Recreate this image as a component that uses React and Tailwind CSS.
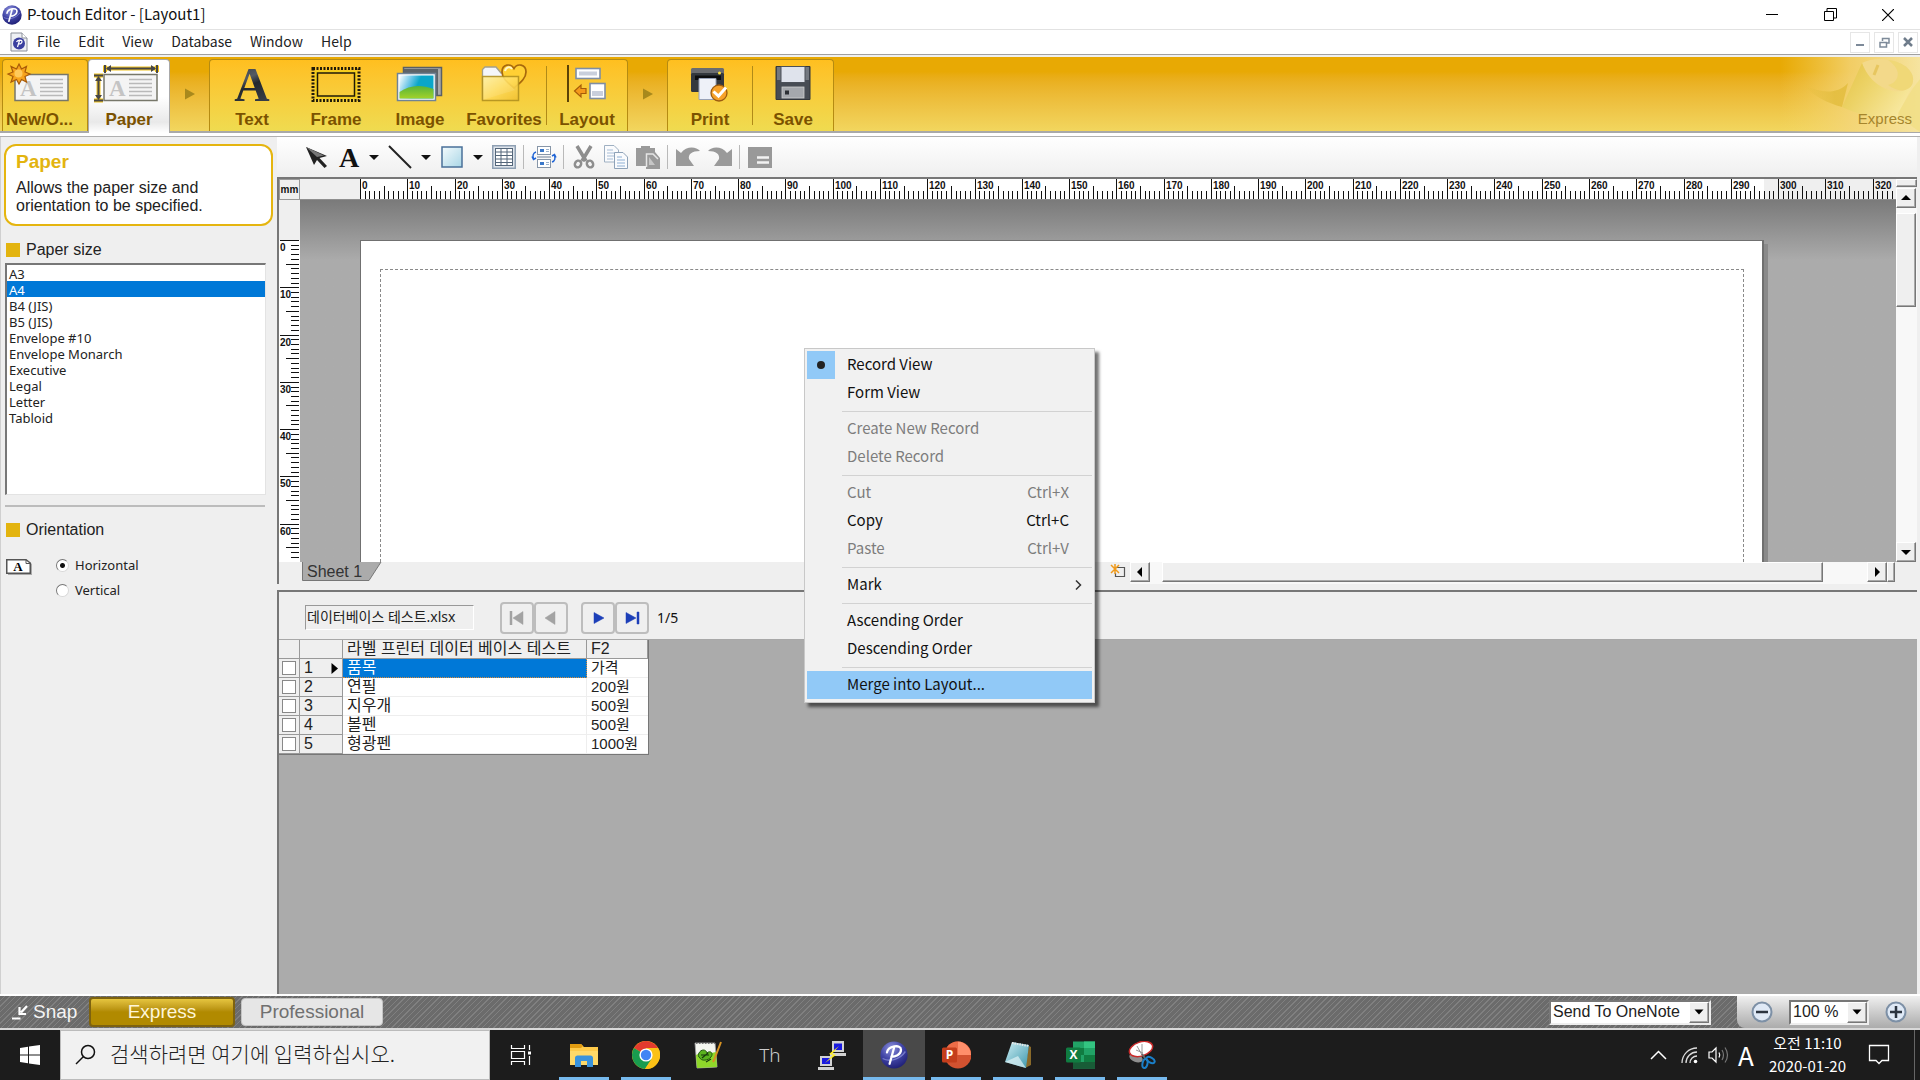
import React from 'react';
import clsx from 'clsx';

const MM = 4.727; // pixels per millimetre at 100 %

const menus = ['File', 'Edit', 'View', 'Database', 'Window', 'Help'];

const paperSizes = [
  'A3', 'A4', 'B4 (JIS)', 'B5 (JIS)', 'Envelope #10', 'Envelope Monarch',
  'Executive', 'Legal', 'Letter', 'Tabloid',
];

const records = [
  ['품목', '가격'],
  ['연필', '200원'],
  ['지우개', '500원'],
  ['볼펜', '500원'],
  ['형광펜', '1000원'],
];

const contextMenu = [
  { label: 'Record View', checked: true },
  { label: 'Form View' },
  null,
  { label: 'Create New Record', disabled: true },
  { label: 'Delete Record', disabled: true },
  null,
  { label: 'Cut', keys: 'Ctrl+X', disabled: true },
  { label: 'Copy', keys: 'Ctrl+C' },
  { label: 'Paste', keys: 'Ctrl+V', disabled: true },
  null,
  { label: 'Mark', sub: true },
  null,
  { label: 'Ascending Order' },
  { label: 'Descending Order' },
  null,
  { label: 'Merge into Layout...', active: true },
];

/* ---------- Icons ---------- */

const PLogo = ({ size, id }) => (
  <svg width={size} height={size} viewBox="0 0 32 32" className="shrink-0">
    <defs>
      <radialGradient id={id} cx="0.4" cy="0.25" r="0.8">
        <stop offset="0" stopColor="#8f93dc" />
        <stop offset="0.5" stopColor="#4347a8" />
        <stop offset="1" stopColor="#1c1c72" />
      </radialGradient>
    </defs>
    <circle cx="16" cy="16" r="15.5" fill={`url(#${id})`} />
    <path d="M3 20C10 24 22 22 29 12" stroke="#9ea3ea" strokeWidth="1.5" fill="none" opacity="0.6" />
    <path d="M16 8 L11 26 M8 13C9 6 24 3 24 10C24 16 17 18 13 18" stroke="#fff" strokeWidth="2.6" fill="none" strokeLinecap="round" />
  </svg>
);

const DocLogo = () => (
  <svg width="18" height="20" viewBox="0 0 18 20" className="shrink-0">
    <path d="M1 1H12L17 6V19H1Z" fill="#eef0f4" stroke="#8a8f99" />
    <path d="M12 1V6H17" fill="#fff" stroke="#8a8f99" />
    <circle cx="9" cy="11.5" r="6" fill="#3a3f9f" />
    <path d="M9.5 8.5L7.5 15M6.5 10C7.5 7.5 12 7.5 12 9.5C12 11.5 9.5 12 8.5 12" stroke="#fff" strokeWidth="1.2" fill="none" />
  </svg>
);

const LabelCard = ({ x }) => (
  <g>
    <rect x={x} y="14.5" width="53" height="26" fill="#f4f4f4" stroke="#77776a" strokeWidth="1.5" />
    <text x={x + 5} y="36" fontSize="23" fontWeight="bold" fontFamily="Liberation Serif, serif" fill="#c4c4c4">A</text>
    <path d={`M${x + 25} 19.5h23M${x + 25} 23.5h23M${x + 25} 27.5h23M${x + 25} 31.5h23M${x + 25} 35.5h23`} stroke="#b9b9b9" strokeWidth="1.5" />
  </g>
);

const NewIcon = () => (
  <svg width="66" height="44" viewBox="0 0 66 44">
    <LabelCard x={9} />
    <path d="M13 4L15.5 9L20.5 6.500L19 12L24 14L19 16.500L20.500 22L15.500 19.500L13 24L10.500 19.500L5 22L7 16.500L2 14L7 12L5 6.500L10.500 9Z" fill="#f7a31c" stroke="#a85a08" strokeWidth="1.2" />
    <circle cx="12.500" cy="13.500" r="4" fill="#ffc95a" />
  </svg>
);

const PaperIcon = () => (
  <svg width="72" height="44" viewBox="0 0 72 44">
    <g stroke="#f0c21c" strokeWidth="4">
      <path d="M12 5.500V12M64 5.500V12M14 8.500H62M1 15.500H10M1 40.500H10M5.500 16V40" />
    </g>
    <LabelCard x={11} />
    <path d="M12 5V13M64 5V13M14 8.500H62M1 15.500H10M1 40.500H10M5.500 18V38" stroke="#474747" strokeWidth="2" />
    <path d="M13 8.500L18 5V12ZM63 8.500L58 5V12ZM5.500 16L9 21H2ZM5.500 40L9 35H2Z" fill="#474747" />
  </svg>
);

const TextIcon = () => (
  <svg width="50" height="44" viewBox="0 0 50 44" className="overflow-visible">
    <defs>
      <linearGradient id="letter" x1="0" y1="0" x2="0.3" y2="1">
        <stop offset="0" stopColor="#23272d" />
        <stop offset="0.45" stopColor="#555b63" />
        <stop offset="0.6" stopColor="#23282e" />
        <stop offset="1" stopColor="#39404a" />
      </linearGradient>
    </defs>
    <text x="25" y="41" textAnchor="middle" fontSize="49" fontWeight="bold" fontFamily="Liberation Serif, serif" fill="url(#letter)">A</text>
  </svg>
);

const FrameIcon = () => (
  <svg width="50" height="44" viewBox="0 0 50 44">
    <rect x="2" y="8.500" width="46" height="32" fill="none" stroke="#1f1a08" strokeWidth="3" strokeDasharray="2 1.500" />
    <rect x="5" y="11.500" width="40" height="26" fill="none" stroke="#f4cf1a" strokeWidth="2" />
    <rect x="6.500" y="13" width="37" height="23" fill="none" stroke="#1f1a08" strokeWidth="1.500" />
  </svg>
);

const ImageIcon = () => (
  <svg width="50" height="44" viewBox="0 0 50 44">
    <defs>
      <linearGradient id="sky" x1="0" y1="0" x2="1" y2="0.3">
        <stop offset="0" stopColor="#fff" />
        <stop offset="0.35" stopColor="#6cc6e8" />
        <stop offset="0.6" stopColor="#0aa6c9" />
      </linearGradient>
      <linearGradient id="hill" x1="0" y1="0" x2="0" y2="1">
        <stop offset="0" stopColor="#56b33a" />
        <stop offset="1" stopColor="#a3d22a" />
      </linearGradient>
    </defs>
    <rect x="8.500" y="7.500" width="38" height="28" fill="#a9a9a9" stroke="#595f66" strokeWidth="1.500" />
    <rect x="9" y="9" width="34" height="26" fill="#5d6368" />
    <rect x="2.500" y="13.500" width="38" height="27" fill="#fff" stroke="#6f8396" strokeWidth="1.500" />
    <rect x="4.500" y="15.500" width="34" height="23" fill="url(#sky)" />
    <path d="M4.500 32C14 25 26 24 38.500 29V38.500H4.500Z" fill="url(#hill)" />
  </svg>
);

const FavoritesIcon = () => (
  <svg width="50" height="44" viewBox="0 0 50 44">
    <defs>
      <linearGradient id="folder" x1="0" y1="0" x2="1" y2="1">
        <stop offset="0" stopColor="#fff0a0" />
        <stop offset="0.5" stopColor="#ffdc5c" />
        <stop offset="1" stopColor="#f0c030" />
      </linearGradient>
    </defs>
    <path d="M3.500 40V9.500L6 7H17L22 13H36V30" fill="#f4f6fa" stroke="#a3a08c" strokeWidth="1.300" />
    <path d="M35 28C28 22 23 18 23 12C23 4 32 3 35 8.500C38 3 47 4 47 12C47 18 42 22 35 28Z" fill="#ffd034" stroke="#a8690c" strokeWidth="1.700" />
    <path d="M26 11C27 7 31 6 33 9" stroke="#fff6c8" strokeWidth="2" fill="none" />
    <path d="M3.500 16.500H39.500V40.500H3.500Z" fill="url(#folder)" stroke="#b39220" strokeWidth="1.500" opacity="0.900" />
  </svg>
);

const LayoutIcon = () => (
  <svg width="50" height="44" viewBox="0 0 50 44">
    <path d="M6 5V42" stroke="#5b4206" strokeWidth="2" />
    <rect x="14" y="8.500" width="24" height="10" fill="#fff" stroke="#7f8ea3" strokeWidth="1.600" />
    <path d="M17 13.500H35" stroke="#c9cfdc" strokeWidth="4" />
    <rect x="28" y="23.500" width="15" height="15" fill="#fff" stroke="#7f8ea3" strokeWidth="1.600" />
    <rect x="30" y="31" width="11" height="5" fill="#c9cfdc" />
    <path d="M12.500 31L19 25V28.500H24V33.500H19V37Z" fill="#f59a1b" stroke="#a65c08" strokeWidth="1.200" />
  </svg>
);

const PrintIcon = () => (
  <svg width="50" height="44" viewBox="0 0 50 44">
    <rect x="6" y="8" width="33" height="8" rx="1.500" fill="#6a6c70" />
    <rect x="6" y="13" width="33" height="19" rx="1.500" fill="#33383e" />
    <path d="M10 15.500H36V20H10Z" fill="#0d0e10" />
    <circle cx="34.500" cy="13" r="1.500" fill="#ffe23a" />
    <path d="M14 18.500H31V39.500H14Z" fill="#eef1f8" stroke="#98a2b8" />
    <circle cx="34" cy="33" r="8" fill="#f7a22a" stroke="#9c5c10" strokeWidth="1.300" />
    <path d="M28.500 31.500L33.500 36L41 27.500" stroke="#fff" strokeWidth="3" fill="none" />
  </svg>
);

const SaveIcon = () => (
  <svg width="50" height="44" viewBox="0 0 50 44">
    <path d="M8 6.500H42V39.500H8Z" fill="#474c54" stroke="#33373d" />
    <path d="M9 7H41V20H9Z" fill="#737880" />
    <rect x="13" y="6.500" width="24" height="16" fill="#dfe3ec" stroke="#4c5159" />
    <rect x="14" y="27" width="22" height="11" fill="#a5a8ad" stroke="#cfcfcf" strokeWidth="0.800" />
    <rect x="17" y="30.500" width="4" height="4" fill="#2c2f34" />
  </svg>
);

const TapeArt = () => (
  <svg width="140" height="75" viewBox="0 0 140 75" className="shrink-0">
    <defs>
      <linearGradient id="tapeBg" x1="0" y1="0" x2="1" y2="0">
        <stop offset="0" stopColor="#f3d56a" stopOpacity="0" />
        <stop offset="0.5" stopColor="#f4d67c" stopOpacity="0.8" />
        <stop offset="1" stopColor="#f6e4a0" />
      </linearGradient>
      <linearGradient id="tape" x1="0" y1="0" x2="1" y2="0.6">
        <stop offset="0" stopColor="#e4c246" />
        <stop offset="0.4" stopColor="#ecd265" />
        <stop offset="1" stopColor="#f8e9a2" />
      </linearGradient>
      <linearGradient id="tapeTail" x1="0" y1="0" x2="1" y2="0">
        <stop offset="0" stopColor="#e2bc3c" stopOpacity="0" />
        <stop offset="0.7" stopColor="#e2bc3c" />
      </linearGradient>
    </defs>
    <rect width="140" height="75" fill="url(#tapeBg)" />
    <path d="M24 28C42 37 58 37 68 26L62 50C48 46 34 40 24 28Z" fill="url(#tapeTail)" opacity="0.800" />
    <path d="M108 3C128 5 139 20 130 31C125 36 110 34 98 28C92 24 86 16 82 6C90 2 100 1 108 3Z" fill="#f3d98a" />
    <path d="M108 3C128 5 139 20 130 31C125 36 115 33 108 28C118 26 124 14 108 3Z" fill="#efd772" opacity="0.800" />
    <path d="M82 6C86 18 96 30 112 34C122 36 130 32 133 27L118 58L122 65C100 62 78 58 62 50Z" fill="url(#tape)" />
    <path d="M133 31L140 22V75C130 68 122 62 118 56Z" fill="#f1de82" opacity="0.700" />
    <path d="M94 18L98 8" stroke="#e3bf4d" strokeWidth="3" opacity="0.700" />
  </svg>
);

const Svg24 = ({ children }) => (
  <svg width="24" height="24" viewBox="0 0 24 24" className="shrink-0 overflow-visible">{children}</svg>
);

const DropArrow = () => (
  <svg width="12" height="24" viewBox="0 0 12 24" className="shrink-0">
    <path d="M1 10H11L6 15Z" fill="#111" />
  </svg>
);

/* ---------- Small parts ---------- */

const RibbonButton = ({ label, icon, className = 'w-[84px] items-center' }) => (
  <button type="button" className={clsx('flex flex-col justify-between whitespace-nowrap pb-px text-[17px] leading-5 font-bold text-[#7b5200]', className)}>
    {icon}
    <span>{label}</span>
  </button>
);

const RibbonGap = () => (
  <div className="flex w-[39px] items-center justify-center">
    <svg width="12" height="12" viewBox="0 0 12 12"><path d="M1 0.500L11 6L1 11.500Z" fill="#a8891c" /></svg>
  </div>
);

const ToolButton = ({ label, children, drop }) => (
  <button type="button" aria-label={label} className="flex items-center gap-2">
    <Svg24>{children}</Svg24>
    {drop && <DropArrow />}
  </button>
);

const ToolSep = () => <div className="-mx-px h-6 w-0.5 border-l border-[#b9b9b9]" />;

const HRuler = () => {
  const ticks = [];
  for (let i = 0; i <= 324; i++) {
    const x = Math.round(60 + i * MM);
    const len = i % 10 === 0 ? 20 : i % 5 === 0 ? 13 : 8;
    ticks.push(<rect key={i} x={x} y={20 - len} width="1" height={len} fill="#111" />);
    if (i % 10 === 0) {
      ticks.push(<text key={`t${i}`} x={x + 2} y="10" fontSize="10" fontWeight="bold" fill="#111">{i}</text>);
    }
  }
  return (
    <svg height="21" className="block w-full min-w-0 flex-1 border-b border-[#8f8f8f] bg-[#efefef]">
      <rect x="61" width="1403" height="21" fill="#fff" />
      {ticks}
    </svg>
  );
};

const VRuler = () => {
  const ticks = [];
  for (let i = 0; i <= 67; i++) {
    const y = Math.round(40 + i * MM);
    const len = i % 10 === 0 ? 19 : i % 5 === 0 ? 13 : 8;
    ticks.push(<rect key={i} x={20 - len} y={y} width={len} height="1" fill="#111" />);
    if (i % 10 === 0) {
      ticks.push(<text key={`t${i}`} x="1" y={y + 11} fontSize="10" fontWeight="bold" fill="#111">{i}</text>);
    }
  }
  return (
    <svg width="21" height="362" className="block shrink-0 bg-white">
      <rect width="21" height="40" fill="#efefef" />
      {ticks}
    </svg>
  );
};

const raised = 'border border-t-white border-l-white border-r-[#777] border-b-[#777] bg-[#efefef] shadow-[inset_-1px_-1px_#a8a8a8]';

const ScrollButton = ({ label, d, className }) => (
  <button type="button" aria-label={label} className={clsx('flex h-5 w-5 shrink-0 items-center justify-center', raised, className)}>
    <svg width="10" height="10" viewBox="0 0 10 10"><path d={d} fill="#000" /></svg>
  </button>
);

const NavButton = ({ label, d, on }) => (
  <button type="button" aria-label={label} className="flex h-8 w-[34px] items-center justify-center rounded border-2 border-[#bdbdbd] bg-[#efefef]">
    <svg width="16" height="14" viewBox="0 0 16 14">
      <path d={d} fill={on ? '#1c3fb8' : '#a3a3a3'} stroke={on ? '#1c3fb8' : '#a3a3a3'} strokeWidth="0.500" />
    </svg>
  </button>
);

const Heading = ({ children }) => (
  <h2 className="flex items-center gap-1.5 pl-[5px] text-base leading-5 text-[#222]">
    <span className="h-3.5 w-3.5 bg-[#e3b40f]" />
    {children}
  </h2>
);

const ComboBox = ({ label, value, className }) => (
  <div className={clsx('flex h-[25px] border-2 border-t-[#777] border-l-[#777] border-r-[#eee] border-b-[#eee] bg-white', className)}>
    <select aria-label={label} className="min-w-0 flex-1 appearance-none bg-white pl-0.5 text-base leading-5 text-[#222] outline-none">
      <option>{value}</option>
    </select>
    <span className={clsx('flex w-5 items-center justify-center', raised)}>
      <svg width="10" height="6" viewBox="0 0 10 6"><path d="M0.500 0.500H9.500L5 5.500Z" fill="#000" /></svg>
    </span>
  </div>
);

const TaskIcon = ({ label, children, open, active }) => (
  <button
    type="button"
    aria-label={label}
    className={clsx('relative flex h-full w-[62px] items-center justify-center', active && 'bg-[#494949]')}
  >
    {children}
    {open && <span className={clsx('absolute bottom-0 h-[3px] bg-[#76b9ed]', active ? 'inset-x-0' : 'inset-x-1.5')} />}
  </button>
);

/* ---------- Sections ---------- */

const TitleBar = () => (
  <header className="flex h-[30px] items-center border-b border-[#e2e2e2] bg-white pl-0.5 font-['Noto_Sans_CJK_KR','Noto_Sans',sans-serif]">
    <PLogo size={20} id="logoTitle" />
    <h1 className="ml-[5px] flex-1 pb-0.5 text-[15px] leading-5">P-touch Editor - [Layout1]</h1>
    <div className="flex">
      <button type="button" aria-label="Minimize" className="flex h-7 w-[58px] items-center justify-center">
        <svg width="12" height="12" viewBox="0 0 12 12"><path d="M0 5.500H12" stroke="#000" /></svg>
      </button>
      <button type="button" aria-label="Restore" className="flex h-7 w-[58px] items-center justify-center">
        <svg width="13" height="13" viewBox="0 0 13 13"><path d="M0.500 3.500H9.500V12.500H0.500ZM3 3.500V0.500H12.500V10H9.500" fill="none" stroke="#000" /></svg>
      </button>
      <button type="button" aria-label="Close" className="mr-[3px] flex h-7 w-[58px] items-center justify-center">
        <svg width="12" height="12" viewBox="0 0 12 12"><path d="M0 0L12 12M12 0L0 12" stroke="#000" strokeWidth="1.200" /></svg>
      </button>
    </div>
  </header>
);

const MenuBar = () => (
  <nav className="flex h-[25px] items-center border-b border-[#a0a0a0] bg-white pl-2.5 font-['Noto_Sans_CJK_KR','Noto_Sans',sans-serif]">
    <DocLogo />
    <div className="flex flex-1 gap-[18px] pb-0.5 pl-[9px] text-sm leading-5 text-[#222]">
      {menus.map((m) => <button type="button" key={m}>{m}</button>)}
    </div>
    <div className="flex gap-1 pr-0.5">
      <button type="button" aria-label="Minimize document" className="flex h-[21px] w-5 items-center justify-center border border-[#e6e6e6]">
        <svg width="10" height="10" viewBox="0 0 10 10"><path d="M1 8H9" stroke="#7d8a99" strokeWidth="2" /></svg>
      </button>
      <button type="button" aria-label="Restore document" className="flex h-[21px] w-5 items-center justify-center border border-[#e6e6e6]">
        <svg width="11" height="11" viewBox="0 0 11 11"><path d="M3.500 4V1.500H10V6H7.500M1 5.500H7.500V10H1Z" fill="none" stroke="#7d8a99" strokeWidth="1.500" /></svg>
      </button>
      <button type="button" aria-label="Close document" className="flex h-[21px] w-5 items-center justify-center border border-[#e6e6e6]">
        <svg width="10" height="10" viewBox="0 0 10 10"><path d="M1 1L9 9M9 1L1 9" stroke="#6f7c8b" strokeWidth="2.500" /></svg>
      </button>
    </div>
  </nav>
);

const group = 'flex rounded-t border border-b-0 border-[#b58b12] bg-linear-to-b from-[#ffbf1f] to-[#efdb50]';

const Ribbon = () => (
  <div className="mt-0.5 flex h-[76px] items-stretch border-b-2 border-[#a9a9a9] bg-linear-to-b from-[#e8a904] from-20% to-[#f2d65e] pl-0.5">
    <div className="flex pt-0.5">
      <div className={group}>
        <RibbonButton label="New/O..." icon={<NewIcon />} className="w-[84px] items-start pl-[3px]" />
      </div>
      <div className="-mb-0.5 flex rounded-t border border-b-0 border-[#a9a9a9] bg-linear-to-b from-white from-50% via-[#e9e9e9] via-85% to-white pb-0.5">
        <RibbonButton label="Paper" icon={<PaperIcon />} className="w-20 items-center" />
      </div>
    </div>
    <RibbonGap />
    <div className="flex pt-0.5">
      <div className={group}>
        <RibbonButton label="Text" icon={<TextIcon />} />
        <RibbonButton label="Frame" icon={<FrameIcon />} />
        <RibbonButton label="Image" icon={<ImageIcon />} />
        <RibbonButton label="Favorites" icon={<FavoritesIcon />} />
        <span className="my-1.5 w-px bg-[#b08a18]" />
        <RibbonButton label="Layout" icon={<LayoutIcon />} className="w-20 items-center" />
      </div>
    </div>
    <RibbonGap />
    <div className="flex pt-0.5">
      <div className={group}>
        <RibbonButton label="Print" icon={<PrintIcon />} />
        <span className="my-1.5 w-px bg-[#b08a18]" />
        <RibbonButton label="Save" icon={<SaveIcon />} className="w-20 items-center" />
      </div>
    </div>
    <div className="relative ml-auto flex">
      <TapeArt />
      <span className="absolute right-2 bottom-0.5 text-[15px] leading-5 text-[#a5852c]">Express</span>
    </div>
  </div>
);

const SidePanel = () => (
  <aside className="flex w-[277px] shrink-0 flex-col border-l border-[#d0d0d0] bg-[#efefef] pt-[7px]">
    <section className="mr-1 ml-[3px] h-[82px] rounded-xl border-2 border-[#e5b50f] bg-white px-2.5 pt-1.5">
      <h2 className="text-[19px] leading-5 font-bold text-[#e3b40f]">Paper</h2>
      <p className="pt-[7px] text-base leading-[18px] text-[#222]">Allows the paper size and orientation to be specified.</p>
    </section>
    <div className="pt-3.5"><Heading>Paper size</Heading></div>
    <select
      size={14}
      aria-label="Paper size"
      defaultValue="A4"
      className="mt-[3px] ml-1 h-[232px] w-[261px] appearance-none overflow-hidden border border-t-2 border-t-[#777] border-l-2 border-l-[#777] border-r-[#e3e3e3] border-b-[#e3e3e3] bg-white font-['Noto_Sans',sans-serif] text-[13px] text-[#222] outline-none"
    >
      {paperSizes.map((s) => (
        <option key={s} className="h-4 min-h-4 p-0 pl-0.5 leading-4 checked:bg-[linear-gradient(#0078d7,#0078d7)] checked:[-webkit-text-fill-color:#fff]">{s}</option>
      ))}
    </select>
    <hr className="mt-2.5 mr-3 ml-1 border-t-2 border-[#bcbcbc]" />
    <div className="pt-[13px]"><Heading>Orientation</Heading></div>
    <div className="flex gap-6 pt-[15px] pl-[5px]">
      <svg width="26" height="28" viewBox="0 0 26 28" className="shrink-0">
        <path d="M2 20V5H21L26 9V20Z" fill="#aaa" />
        <path d="M0.750 4.750H20L24.250 8V18.250H0.750Z" fill="#fff" stroke="#555" strokeWidth="1.500" />
        <path d="M20 4.500V8.500H24.500" fill="none" stroke="#555" />
        <text x="12" y="16" textAnchor="middle" fontSize="13" fontWeight="bold" fontFamily="Liberation Serif, serif">A</text>
      </svg>
      <div className="flex flex-col gap-[5px] font-['Noto_Sans',sans-serif] text-[13px] leading-5 text-[#222]">
        {['Horizontal', 'Vertical'].map((o) => (
          <label key={o} className="flex items-center gap-1.5">
            <input
              type="radio"
              name="orientation"
              defaultChecked={o === 'Horizontal'}
              className="h-[13px] w-[13px] appearance-none rounded-full border border-t-[#777] border-l-[#777] border-r-[#d8d8d8] border-b-[#d8d8d8] bg-white checked:bg-[radial-gradient(circle,#111_0_2px,#fff_3px)]"
            />
            {o}
          </label>
        ))}
      </div>
    </div>
  </aside>
);

const Toolbar = () => (
  <div className="flex h-10 items-center gap-2 bg-linear-to-b from-white to-[#efefef] pb-px pl-[27px]">
    <ToolButton label="Select">
      <path d="M2 2L23 11L15.500 13L23 21L20.500 23L13 15L10 20Z" fill="#222" />
      <path d="M2 2L20 10.500L13 12Z" fill="#777" />
    </ToolButton>
    <ToolButton label="Text" drop>
      <text x="13" y="22" textAnchor="middle" fontSize="28" fontWeight="bold" fontFamily="Liberation Serif, serif" fill="#111">A</text>
    </ToolButton>
    <ToolButton label="Line" drop>
      <path d="M1 1L23 23" stroke="#222" strokeWidth="2" />
    </ToolButton>
    <ToolButton label="Shape" drop>
      <defs>
        <linearGradient id="shape" x1="0" y1="0" x2="1" y2="1">
          <stop offset="0" stopColor="#f4fbfd" />
          <stop offset="1" stopColor="#a9d6e6" />
        </linearGradient>
      </defs>
      <rect x="2" y="2" width="20" height="20" fill="url(#shape)" stroke="#4a7099" strokeWidth="1.500" />
    </ToolButton>
    <ToolButton label="Table">
      <rect x="0.750" y="0.750" width="22.500" height="22.500" fill="#dfe5ec" stroke="#8fa0b3" strokeWidth="1.500" />
      <rect x="3.500" y="3.500" width="17" height="17" fill="#fff" stroke="#54667a" />
      <path d="M3.500 7H20.500M3.500 10.500H20.500M3.500 14H20.500M3.500 17.500H20.500M9 3.500V20.500M15 3.500V20.500" stroke="#54667a" />
    </ToolButton>
    <ToolSep />
    <ToolButton label="Arrange">
      <rect x="5.500" y="1.500" width="13" height="8" fill="#fff" stroke="#8796a8" />
      <rect x="5.500" y="14.500" width="13" height="8" fill="#fff" stroke="#8796a8" />
      <path d="M5 12H19" stroke="#b3bcc8" strokeWidth="2" />
      <path d="M8 4H12V7H8ZM8 17H12V20H8Z" fill="#3b78c9" />
      <path d="M14 4.500H17M14 6.500H17M14 17.500H17M14 19.500H17" stroke="#9db3cc" />
      <path d="M4 7C1 8 0.500 11 1.500 14M0 11.500L1.500 14.500L4 13M20 17C23 16 23.500 13 22.500 10M24 12.500L22.500 9.500L20 11" stroke="#1f64d6" strokeWidth="1.500" fill="none" />
    </ToolButton>
    <ToolSep />
    <ToolButton label="Cut">
      <path d="M5 1L14 16M19 1L10 16" stroke="#8e8e8e" strokeWidth="3.500" />
      <ellipse cx="6" cy="19" rx="3" ry="3.500" fill="none" stroke="#8e8e8e" strokeWidth="2.500" transform="rotate(35 6 19)" />
      <ellipse cx="18" cy="19" rx="3" ry="3.500" fill="none" stroke="#8e8e8e" strokeWidth="2.500" transform="rotate(-35 18 19)" />
    </ToolButton>
    <ToolButton label="Copy">
      <path d="M0.500 0.500H10L14.500 5V17H0.500Z" fill="#fafbfd" stroke="#9fb0c2" />
      <path d="M3 5H9M3 8H11M3 11H11M3 14H9" stroke="#a7bdd6" />
      <path d="M10.500 7.500H19L23.500 12V23.500H10.500Z" fill="#fafbfd" stroke="#8ea2b8" />
      <path d="M13 12H18M13 15H21M13 18H21M13 21H21" stroke="#8fb0d4" />
    </ToolButton>
    <ToolButton label="Paste">
      <path d="M0 3H5V1H14V3H19V7L24 13V24H10V21H0Z" fill="#9a9a9a" />
      <path d="M10.500 22V9H17L22 14" fill="none" stroke="#e6e6e6" strokeWidth="1.500" />
      <path d="M13 12L19 20H13Z" fill="#e6e6e6" opacity="0.600" />
    </ToolButton>
    <ToolSep />
    <ToolButton label="Undo">
      <path d="M0 4L5 8C10 1 20 1 24 6C16 6 12 9 13 14L18 21H0Z" fill="#9a9a9a" />
    </ToolButton>
    <ToolButton label="Redo">
      <path d="M24 4L19 8C14 1 4 1 0 6C8 6 12 9 11 14L6 21H24Z" fill="#9a9a9a" />
    </ToolButton>
    <ToolSep />
    <ToolButton label="Properties">
      <rect x="0" y="2" width="24" height="21" fill="#999" />
      <path d="M9 12.500H21M9 17.500H21" stroke="#f2f2f2" strokeWidth="2.500" />
    </ToolButton>
  </div>
);

const LayoutPane = () => (
  <section className="flex border-t-2 border-l-2 border-[#777] bg-[#efefef]">
    <div className="min-w-0 flex-1">
      <div className="flex h-[21px]">
        <div className="flex w-[21px] items-center justify-center border border-[#999] text-[10px] leading-4 font-bold">mm</div>
        <HRuler />
      </div>
      <div className="flex h-[362px]">
        <VRuler />
        <div className="flex min-w-0 flex-1 overflow-hidden bg-linear-to-b from-[#7a7a7a] to-[#ababab] to-[60px] pt-10 pl-[60px]">
          <div className="w-[1404px] shrink-0 border-t border-l border-r-2 border-[#707070] bg-white pt-7 pr-[18px] pl-[19px] shadow-[4px_4px_#8a8a8a]">
            <div className="h-full border border-b-0 border-dashed border-[#8a8a8a]" />
          </div>
        </div>
      </div>
      <div className="flex h-[22px] bg-[#efefef] pl-[23px]">
        <button type="button" className="relative h-5 w-20">
          <svg width="80" height="20" viewBox="0 0 80 20" className="absolute inset-0">
            <path d="M0.500 0V18.500H67L79 0" fill="#ababab" stroke="#777" />
          </svg>
          <span className="relative block pl-[5px] text-left text-base leading-4 text-[#333]">Sheet 1</span>
        </button>
        <div className="flex flex-1 justify-end">
          <svg width="16" height="20" viewBox="0 0 16 20" className="mr-1">
            <path d="M7 5.500H14.500V14.500H5.500V11" fill="none" stroke="#555" strokeWidth="1.200" />
            <path d="M1 3L9 11M9 3L1 11M5 2V12" stroke="#f09a1a" strokeWidth="1.500" />
          </svg>
          <div className="flex w-[757px] bg-[#f8f8f8]">
            <ScrollButton label="Scroll left" d="M7 0V10L2 5Z" />
            <div className={clsx('ml-3 h-5 flex-1', raised)} />
            <ScrollButton label="Scroll right" d="M3 0V10L8 5Z" className="ml-11" />
          </div>
          <div className={clsx('mr-px h-5 w-2', raised)} />
        </div>
      </div>
    </div>
    <div className="flex w-[21px] shrink-0 flex-col">
      <div className={clsx('h-2', raised)} />
      <ScrollButton label="Scroll up" d="M0 7H10L5 2Z" className="mt-px" />
      <div className="flex flex-1 flex-col bg-[#f8f8f8] pt-[5px]">
        <div className={clsx('h-[94px] w-5', raised)} />
      </div>
      <ScrollButton label="Scroll down" d="M0 3H10L5 8Z" />
      <div className="h-[22px]" />
    </div>
  </section>
);

const cell = 'border-r border-b border-[#999] bg-[#efefef] p-0 font-normal';

const DataPane = () => (
  <section className="mt-1.5 flex flex-1 flex-col border-t-2 border-l-2 border-[#777] bg-[#ababab]">
    <div className="flex h-12 items-center border-b border-[#a8a8a8] bg-[#efefef] pt-1 pl-[26px]">
      <input
        aria-label="Database file"
        readOnly
        value="데이터베이스 테스트.xlsx"
        className="h-[25px] w-[169px] border border-t-[#999] border-l-[#999] border-r-white border-b-white bg-transparent px-px pb-1 font-['Noto_Sans','Noto_Sans_CJK_KR',sans-serif] text-sm leading-5 text-[#222] outline-none"
      />
      <div className="ml-[26px] flex">
        <NavButton label="First record" d="M1 0H3V14H1ZM14 0.500V13.500L4 7Z" />
        <NavButton label="Previous record" d="M12 0.500V13.500L2 7Z" />
      </div>
      <div className="mr-2 ml-[13px] flex">
        <NavButton label="Next record" d="M4 1.500V12.500L14 7Z" on />
        <NavButton label="Last record" d="M2 1.500V12.500L12 7ZM13 1H15V13H13Z" on />
      </div>
      <span className="font-['Noto_Sans',sans-serif] text-sm">1/5</span>
    </div>
    <table className="w-[370px] table-fixed border-separate border-spacing-0 border-r border-b border-[#777] font-['Liberation_Sans','Noto_Sans_CJK_KR',sans-serif] text-base leading-[18px] text-[#222]">
      <colgroup>
        <col className="w-[21px]" />
        <col className="w-[43px]" />
        <col className="w-[244px]" />
        <col />
      </colgroup>
      <thead>
        <tr className="h-[19px] text-left whitespace-nowrap">
          <th className={cell} aria-label="Selected" />
          <th className={cell} aria-label="Number" />
          <th className={clsx(cell, 'pl-1')}>라벨 프린터 데이터 베이스 테스트</th>
          <th className={clsx(cell, 'pl-1')}>F2</th>
        </tr>
      </thead>
      <tbody>
        {records.map(([name, price], i) => (
          <tr key={name} className="h-[19px]">
            <td className={cell}>
              <input type="checkbox" aria-label={`Record ${i + 1}`} className="mx-auto block h-3.5 w-3.5 appearance-none border border-[#888] bg-white" />
            </td>
            <td className={cell}>
              <div className="flex items-center justify-between px-1">
                {i + 1}
                {i === 0 && <svg width="7" height="11" viewBox="0 0 7 11"><path d="M0.500 0L7 5.500L0.500 11Z" /></svg>}
              </div>
            </td>
            <td className={clsx('border-r border-b p-0 pl-1', i === 0 ? 'border-[#d98a3a] border-dotted bg-[#0078d7] text-white' : 'border-[#eee] bg-white')}>{name}</td>
            <td className="border-b border-[#eee] bg-white p-0 pl-1 text-[15px]">{price}</td>
          </tr>
        ))}
      </tbody>
    </table>
  </section>
);

const StatusBar = () => (
  <footer className="flex h-9 items-center border-t-2 border-b-2 border-t-white border-b-[#d8d8d8] bg-[repeating-linear-gradient(135deg,#6b6b6b_0_3px,#808080_3px_4px)] text-[19px] leading-5">
    <button type="button" className="flex w-[89px] items-center gap-1 pl-3 text-[#f4f4f4]">
      <svg width="17" height="18" viewBox="0 0 17 18">
        <path d="M0 15.500H8.500M15 3L9 9.500M7.500 4V11H14" fill="none" stroke="#fff" strokeWidth="2.200" />
      </svg>
      Snap
    </button>
    <button type="button" className="h-[30px] w-[146px] rounded-sm border-2 border-[#7d6210] bg-linear-to-b from-[#e6c53e] to-[#b18a00] to-50% text-[#fff6d8]">Express</button>
    <button type="button" className="ml-1.5 h-7 w-[142px] rounded-sm border border-[#c4c4c4] bg-[#e6e6e6] text-[#707070]">Professional</button>
    <ComboBox label="Printer" value="Send To OneNote" className="ml-auto w-[162px]" />
    <div className="ml-[26px] flex h-full items-center gap-4 rounded-bl-lg bg-linear-to-b from-[#f0f0f0] to-[#ababab] pr-[13px] pl-3.5">
      {['M5 11H17', 'M5 11H17M11 5V17'].map((d, i) => (
        <button type="button" key={d} aria-label={i ? 'Zoom in' : 'Zoom out'} className={i ? 'order-3' : 'order-1'}>
          <svg width="22" height="22" viewBox="0 0 22 22">
            <circle cx="11" cy="11" r="9.500" fill="#dfe9f6" stroke="#7d90a6" strokeWidth="2" />
            <path d={d} stroke="#2b3440" strokeWidth="2.500" />
          </svg>
        </button>
      ))}
      <ComboBox label="Zoom" value="100 %" className="order-2 w-20" />
    </div>
  </footer>
);

const TaskBar = () => (
  <div className="flex h-[50px] items-center bg-[#1c1c1c] font-['Noto_Sans_CJK_KR',sans-serif] text-white">
    <button type="button" aria-label="Start" className="flex h-full w-[60px] items-center justify-center">
      <svg width="20" height="20" viewBox="0 0 20 20">
        <path d="M0 3L8 1.800V9.500H0ZM9 1.600L20 0V9.500H9ZM0 10.500H8V18.200L0 17ZM9 10.500H20V20L9 18.400Z" fill="#fff" />
      </svg>
    </button>
    <label className="flex h-full w-[430px] items-center gap-3.5 border border-[#bbb] bg-[#f1f1f1] pb-0.5 pl-3.5">
      <svg width="21" height="21" viewBox="0 0 21 21" className="shrink-0">
        <circle cx="13" cy="8" r="6.500" fill="none" stroke="#111" strokeWidth="1.500" />
        <path d="M8.500 12.500L1 20" stroke="#111" strokeWidth="1.500" />
      </svg>
      <input type="text" aria-label="Search" placeholder="검색하려면 여기에 입력하십시오." className="min-w-0 flex-1 bg-transparent text-[21px] font-light text-[#222] outline-none placeholder:text-[#222]" />
    </label>
    <TaskIcon label="Task view">
      <svg width="22" height="20" viewBox="0 0 22 20">
        <path d="M1.500 0V3.500H14.500V0M1.500 20V16.500H14.500V20M1.500 6.500H14.500V13.500H1.500ZM19.500 0V5M19.500 11V20" fill="none" stroke="#fff" strokeWidth="1.200" />
        <rect x="18" y="6.500" width="3" height="3" fill="#fff" />
      </svg>
    </TaskIcon>
    <div className="ml-px flex h-full">
      <TaskIcon label="File Explorer" open>
        <svg width="28" height="24" viewBox="0 0 28 24">
          <path d="M0 1H11L14 4H28V22H0Z" fill="#ffcb4a" />
          <path d="M0 1H11L13 3L11 5H0Z" fill="#e29c10" />
          <path d="M0 8H28V22H0Z" fill="#ffd968" />
          <path d="M5 24V15C5 13.500 6 12.500 7.500 12.500H20.500C22 12.500 23 13.500 23 15V24H17V18H11V24Z" fill="#3a93dc" />
        </svg>
      </TaskIcon>
      <TaskIcon label="Chrome" open>
        <svg width="28" height="28" viewBox="0 0 28 28">
          <circle cx="14" cy="14" r="14" fill="#fbc116" />
          <path d="M14 14L1.900 7A14 14 0 0 1 26.100 7H14Z" fill="#e33b2e" />
          <path d="M14 14L1.900 7A14 14 0 0 0 13 28L19.500 18Z" fill="#189c4f" />
          <path d="M14 7H26.100A14 14 0 0 1 13 28L20 17.500Z" fill="#fbc116" />
          <circle cx="14" cy="14" r="6.600" fill="#fff" />
          <circle cx="14" cy="14" r="5.200" fill="#4285f4" />
        </svg>
      </TaskIcon>
      <TaskIcon label="Notepad++">
        <svg width="28" height="28" viewBox="0 0 28 28">
          <path d="M1 2H21L23 26L3 27Z" fill="#f4f6f0" stroke="#aaa" strokeWidth="0.800" />
          <path d="M2 14C8 11 16 13 22 11L23 26L3 27Z" fill="#8fd82a" />
          <path d="M5 12C7 8 12 8 13 12C16 9 20 12 17 16C14 20 7 20 6 17C4 16 4 13 5 12Z" fill="#5ab31e" stroke="#245c10" />
          <path d="M7 14H15M8 17L14 12M12 21L17 18" stroke="#16380c" strokeWidth="1.200" />
          <path d="M27 1L20 19L19 21" stroke="#d79222" strokeWidth="2" fill="none" />
          <path d="M2 2.500H21" stroke="#777" strokeDasharray="1.500 1.500" />
        </svg>
      </TaskIcon>
      <TaskIcon label="Typing helper">
        <svg width="28" height="28" viewBox="0 0 28 28" className="overflow-visible">
          <text x="14" y="21" textAnchor="middle" fontSize="19" fontFamily="Noto Sans, sans-serif" fontWeight="300" fill="#ccc">Th</text>
        </svg>
      </TaskIcon>
      <TaskIcon label="PuTTY">
        <svg width="30" height="30" viewBox="0 0 30 30">
          <path d="M15 1H27V12H15ZM13 13H29V16H13ZM3 16H15V26H3ZM1 27H17V30H1Z" fill="#d2d2d2" />
          <path d="M17 3.500H25V10H17ZM5 18H13V24H5Z" fill="#1a1ae0" />
          <path d="M22 6L12 14L16 15L8 23L19 15L15 14Z" fill="#ffef1a" />
        </svg>
      </TaskIcon>
      <TaskIcon label="P-touch Editor" open active><PLogo size={28} id="logoTask" /></TaskIcon>
      <TaskIcon label="PowerPoint" open>
        <svg width="29" height="28" viewBox="0 0 29 28">
          <circle cx="16" cy="14" r="13.500" fill="#d35230" />
          <path d="M16 0.500A13.500 13.500 0 0 1 29 14H16Z" fill="#ff8f6b" />
          <path d="M16 0.500A13.500 13.500 0 0 0 5 6V14H16Z" fill="#ed6c47" />
          <rect x="0" y="6.500" width="15" height="15" rx="1.500" fill="#c43e1c" />
          <text x="7.500" y="18" textAnchor="middle" fontSize="12" fontWeight="bold" fontFamily="Open Sans, sans-serif" fill="#fff">P</text>
        </svg>
      </TaskIcon>
      <TaskIcon label="Notepad" open>
        <svg width="28" height="28" viewBox="0 0 28 28">
          <defs>
            <linearGradient id="pad" x1="0" y1="0" x2="1" y2="1">
              <stop offset="0" stopColor="#cdeef4" />
              <stop offset="1" stopColor="#3c97ac" />
            </linearGradient>
          </defs>
          <path d="M25 5L27 6V24L21 27Z" fill="#8a6a2a" />
          <path d="M8 1L25 4L22 27L1 21Z" fill="url(#pad)" />
          <path d="M8 2L25 5" stroke="#e9e9e9" strokeWidth="2" strokeDasharray="1.500 1" />
          <path d="M1 21L22 27L20 24L14 15Z" fill="#e3f3f6" opacity="0.700" />
        </svg>
      </TaskIcon>
      <TaskIcon label="Excel" open>
        <svg width="29" height="28" viewBox="0 0 29 28">
          <path d="M7 0.500H29V27.500H7Z" fill="#21a366" />
          <path d="M18 0.500H29V7H18Z" fill="#33c481" />
          <path d="M18 14H29V21H18ZM7 7H18V14H7Z" fill="#107c41" />
          <path d="M7 21H29V27.500H7Z" fill="#185c37" />
          <rect x="0" y="6.500" width="15" height="15" rx="1.500" fill="#107c41" />
          <text x="7.500" y="18" textAnchor="middle" fontSize="12" fontWeight="bold" fontFamily="Open Sans, sans-serif" fill="#fff">X</text>
        </svg>
      </TaskIcon>
      <TaskIcon label="Snipping Tool" open>
        <svg width="28" height="29" viewBox="0 0 28 29">
          <ellipse cx="8" cy="17" rx="7" ry="4" fill="#8f8f8f" transform="rotate(20 8 17)" />
          <ellipse cx="13" cy="8" rx="12" ry="7" fill="#fff" stroke="#c92a2a" strokeWidth="1.500" transform="rotate(-18 13 8)" />
          <path d="M9 5L14 14M14 3V14M8 9L15 12" stroke="#999" />
          <path d="M14 13L17 17" stroke="#666" strokeWidth="2" />
          <ellipse cx="17" cy="22.500" rx="2.500" ry="4.500" fill="none" stroke="#1a7fc9" strokeWidth="2" transform="rotate(12 17 22.500)" />
          <ellipse cx="22.500" cy="19" rx="4.500" ry="2.500" fill="none" stroke="#1a7fc9" strokeWidth="2" transform="rotate(30 22.500 19)" />
        </svg>
      </TaskIcon>
    </div>
    <div className="ml-auto flex h-full items-center">
      <svg width="17" height="10" viewBox="0 0 17 10"><path d="M1 9L8.500 1.500L16 9" fill="none" stroke="#fff" strokeWidth="1.500" /></svg>
      <svg width="17" height="17" viewBox="0 0 17 17" className="ml-3.5">
        <path d="M1 16A15 15 0 0 1 16 1M5 16A11 11 0 0 1 16 5M9 16A7 7 0 0 1 16 9" fill="none" stroke="#ddd" strokeWidth="1.300" />
        <circle cx="14.500" cy="14.500" r="1.800" fill="#fff" />
      </svg>
      <svg width="21" height="18" viewBox="0 0 21 18" className="ml-2.5">
        <path d="M1 6H4L8 2V16L4 12H1Z" fill="none" stroke="#fff" strokeWidth="1.200" />
        <path d="M11 6.500Q12.500 9 11 11.500" fill="none" stroke="#fff" strokeWidth="1.200" />
        <path d="M14 4Q17 9 14 14M17 1.500Q22 9 17 16.500" fill="none" stroke="#777" strokeWidth="1.200" />
      </svg>
      <span className="ml-2 w-[18px] text-center text-[26px] leading-6">A</span>
      <div className="mx-3.5 pb-0.5 text-center text-[15px] leading-[23px] whitespace-nowrap">
        <div>오전 11:10</div>
        <div>2020-01-20</div>
      </div>
      <svg width="22" height="22" viewBox="0 0 22 22" className="mx-2">
        <path d="M1.500 1.500H20.500V16.500H14L11 19.500L8 16.500H1.500Z" fill="none" stroke="#fff" strokeWidth="1.300" />
      </svg>
      <div className="mr-[5px] ml-4 h-full w-px bg-[#666]" />
    </div>
  </div>
);

const ContextMenu = () => (
  <ul role="menu" className="absolute top-[348px] left-[804px] w-[291px] border border-[#c8c8c8] bg-[#f1f1f1] p-0.5 pb-[3px] font-['Noto_Sans_CJK_KR','Noto_Sans',sans-serif] text-[15px] shadow-[4px_4px_3px_rgba(0,0,0,0.55)]">
    {contextMenu.map((item, i) => item ? (
      <li key={item.label} role="none">
        <button
          type="button"
          role="menuitem"
          disabled={item.disabled}
          className={clsx('flex h-7 w-full items-center pr-2.5 text-left leading-5', item.disabled ? 'text-[#7d7d7d]' : 'text-[#111]', item.active && 'bg-[#91c9f7]')}
        >
          <span className={clsx('mr-3 flex h-7 w-7 items-center justify-center', item.checked && 'bg-[#91c9f7]')}>
            {item.checked && <span className="h-2 w-2 rounded-full bg-[#222]" />}
          </span>
          <span className="flex-1 pb-0.5">{item.label}</span>
          {item.keys && <span className="pr-[13px] pb-0.5">{item.keys}</span>}
          {item.sub && <svg width="7" height="10" viewBox="0 0 7 10"><path d="M1 0.500L5.500 5L1 9.500" fill="none" stroke="#333" strokeWidth="1.500" /></svg>}
        </button>
      </li>
    ) : (
      <li key={i} role="separator" className="ml-[35px] flex h-2 items-center"><span className="h-px w-full bg-[#d2d2d2]" /></li>
    ))}
  </ul>
);

export default function App() {
  return (
    <div className="relative flex min-h-screen flex-col bg-[#efefef] font-['Liberation_Sans','Noto_Sans_CJK_KR',sans-serif] text-[#111]">
      <TitleBar />
      <MenuBar />
      <Ribbon />
      <div className="h-1 border-b border-[#b0b0b0] bg-white" />
      <main className="flex flex-1">
        <SidePanel />
        <div className="flex min-w-0 flex-1 flex-col pr-[3px]">
          <Toolbar />
          <LayoutPane />
          <DataPane />
        </div>
      </main>
      <StatusBar />
      <TaskBar />
      <ContextMenu />
    </div>
  );
}
